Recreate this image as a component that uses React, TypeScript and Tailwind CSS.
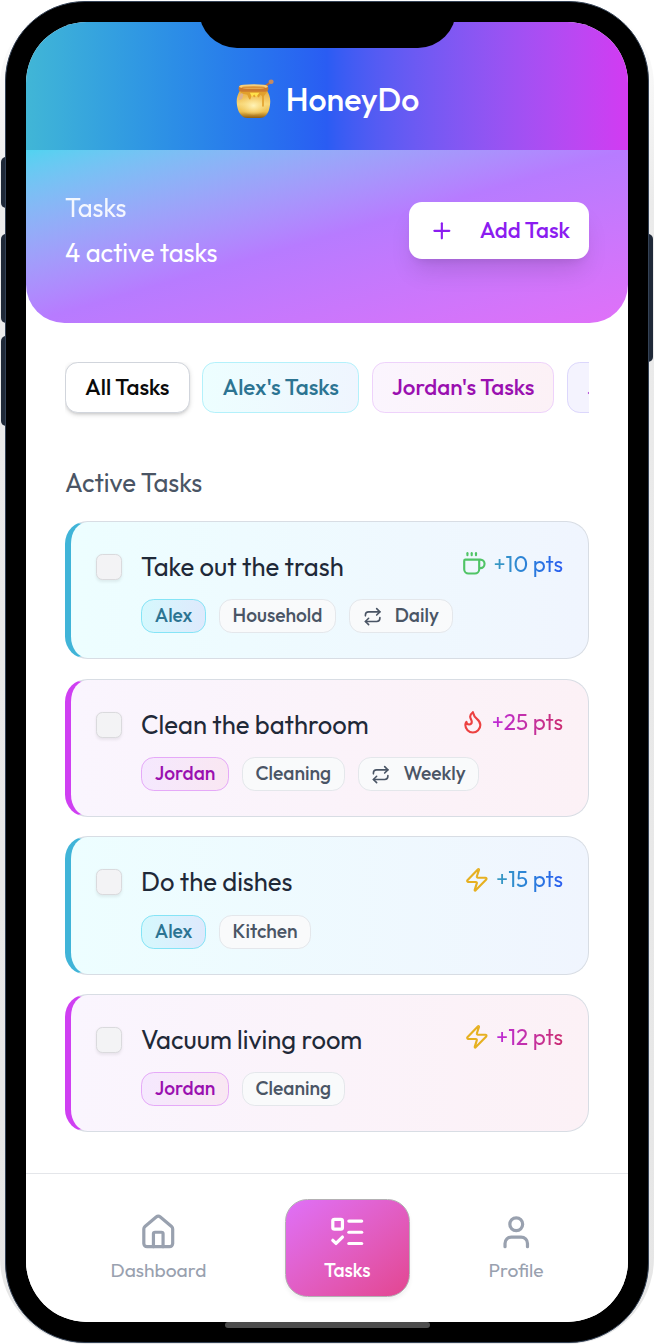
import React from "react";
import { Coffee, Flame, House, ListTodo, Plus, Repeat, User, Zap } from "lucide-react";

type Person = "Alex" | "Jordan";

interface Task {
  title: string;
  who: Person;
  room: string;
  every?: string;
  points: number;
  level: "easy" | "medium" | "hard";
}

const tasks: Task[] = [
  { title: "Take out the trash", who: "Alex", room: "Household", every: "Daily", points: 10, level: "easy" },
  { title: "Clean the bathroom", who: "Jordan", room: "Cleaning", every: "Weekly", points: 25, level: "hard" },
  { title: "Do the dishes", who: "Alex", room: "Kitchen", points: 15, level: "medium" },
  { title: "Vacuum living room", who: "Jordan", room: "Cleaning", points: 12, level: "medium" },
];

const theme = {
  Alex: {
    card: "border-l-[#40b4d8] from-[#edfeff] to-[#f0f5fe]",
    chip: "border-[#85e4f6] from-[#d5f8fd] to-[#dee9fc] text-[#2c7492]",
    points: "from-[#3a9bc0] to-[#2b5cf0]",
  },
  Jordan: {
    card: "border-l-[#cf3ff2] from-[#faf5fe] to-[#fcf1f6]",
    chip: "border-[#e5a9f8] from-[#f5e8fe] to-[#f9e7f2] text-[#9a10b0]",
    points: "from-[#bd27d8] to-[#cb2a70]",
  },
};

function HoneyPot() {
  return (
    <svg viewBox="0 0 38 40" className="h-[41px] w-[39px]">
      <defs>
        <linearGradient id="jar" x1="0" y1="0" x2="0" y2="1">
          <stop offset="0" stopColor="#e9a93c" />
          <stop offset="0.5" stopColor="#f8d878" />
          <stop offset="0.78" stopColor="#edbe4c" />
          <stop offset="1" stopColor="#8f5c10" />
        </linearGradient>
        <radialGradient id="shine" cx="0.5" cy="0.55" r="0.5">
          <stop offset="0" stopColor="#fff3b8" />
          <stop offset="1" stopColor="#fbe08a" stopOpacity="0" />
        </radialGradient>
      </defs>
      <path d="M28 8 35 3" stroke="#b06f48" strokeWidth="2" strokeLinecap="round" />
      <ellipse cx="35.200" cy="2.700" rx="2.500" ry="2.200" fill="#c48a62" />
      <path d="M5 11C2 16 1 20 2 26c1 7 5 12 10 12h12c6 0 9-5 10-12 1-6 0-10-3-15Z" fill="url(#jar)" />
      <ellipse cx="18" cy="25" rx="14" ry="10" fill="url(#shine)" />
      <path d="M5 12c1 3 3 3 6 3 1.500 0 1.500 2 2.500 4s1.600 1 2-1 2-2 2.500-1 1.500 1 2-.5 1.500-1 2 .5 1.500 1 2-.5 2-1 2.500 1v8c0 2 1.600 2 1.600 0v-8c0-2 3-3 3-5.500Z" fill="#e2a02c" />
      <path d="m14.500 13.500 2 4 2.200-2.500 2 2.500 3-4Z" fill="#ffe04b" />
      <rect x="3.500" y="6" width="29" height="6.500" rx="3.200" fill="#cb7a2e" />
      <ellipse cx="18" cy="7.300" rx="14" ry="2.300" fill="#f7d07a" />
      <ellipse cx="18" cy="8.200" rx="11.500" ry="1.100" fill="#dc9338" />
      <path d="M6 14c-1.500 2-2.500 4-2.500 6.500 3.500.5 4.500-3 4.500-6Z" fill="#d9b098" opacity=".85" />
    </svg>
  );
}

function LevelIcon({ level }: { level: Task["level"] }) {
  if (level === "easy") return <Coffee className="size-[25.7px] text-[#50c466]" />;
  if (level === "hard") return <Flame className="size-[25.7px] text-[#ec4141]" />;
  return <Zap className="size-[25.7px] text-[#e6b021]" />;
}

const chipBase =
  "flex h-[34px] items-center rounded-[12.8px] border px-[12.7px] text-[19.2px] font-medium whitespace-nowrap pb-px";

function TaskCard({ task }: { task: Task }) {
  const t = theme[task.who];
  return (
    <div
      className={`flex h-[138.300px] rounded-[22.5px] border border-l-[6px] border-y-[#d8dde4] border-r-[#d8dde4] bg-linear-to-r pr-[25px] pl-[25px] ${t.card}`}
    >
      <div className="mt-[32px] size-[26px] shrink-0 rounded-[6.4px] border border-[#dadadd] bg-[#f3f3f5] shadow-[0_1.6px_3px_rgba(0,0,0,0.07)]" />
      <div className="ml-[19px] flex min-w-0 flex-1 flex-col pt-[26px]">
        <div className="text-[25.6px] leading-[38.5px] font-[440] whitespace-nowrap text-[#1f2938]">{task.title}</div>
        <div className="mt-[12.7px] flex gap-[12.8px]">
          <div className={`${chipBase} bg-linear-to-r ${t.chip}`}>{task.who}</div>
          <div className={`${chipBase} border-[#e4e7eb] bg-[#f9fafb] text-[#4a5565]`}>{task.room}</div>
          {task.every && (
            <div className={`${chipBase} gap-[12.8px] border-[#e4e7eb] bg-[#f9fafb] text-[#4a5565]`}>
              <Repeat className="mt-[2px] size-[19.3px]" />
              {task.every}
            </div>
          )}
        </div>
      </div>
      <div className="mt-[25px] flex h-[34px] shrink-0 items-center gap-[6.400px]">
        <LevelIcon level={task.level} />
        <span
          className={`bg-linear-to-r bg-clip-text text-[22.4px] leading-[32px] font-[440] whitespace-nowrap text-transparent ${t.points}`}
        >
          +{task.points} pts
        </span>
      </div>
    </div>
  );
}

const tab =
  "flex h-[51px] shrink-0 items-center rounded-[12.8px] border px-[19.1px] pt-px text-[22.4px] font-medium whitespace-nowrap";

export default function App() {
  return (
    <div className="relative h-[1344px] w-[654px] overflow-hidden bg-white font-['Outfit','Lato',sans-serif]">
      <div className="absolute top-0 left-0 h-[1344px] w-[654px] rounded-[86px] bg-linear-to-b from-white via-[#ebebeb] via-15% to-[#e6e6e6]" />
      <div className="absolute top-[157px] left-[1px] h-[51px] w-[10px] rounded-l-[5px] bg-[#1f2938]" />
      <div className="absolute top-[234px] left-[1px] h-[89px] w-[10px] rounded-l-[5px] bg-[#1f2938]" />
      <div className="absolute top-[336px] left-[1px] h-[90px] w-[10px] rounded-l-[5px] bg-[#1f2938]" />
      <div className="absolute top-[234px] left-[643px] h-[128px] w-[10px] rounded-r-[5px] bg-[#1f2938]" />

      <div className="relative mt-[1px] ml-[5px] h-[1342px] w-[644px] rounded-[80px] border border-[#344256] bg-black pt-[20px] pl-[20px]">
        <div className="flex h-[1300px] w-[602px] flex-col overflow-hidden rounded-[61px] bg-white">
          <header className="flex h-[128px] shrink-0 items-center justify-center bg-linear-to-r from-[#41b6d6] via-[#2a5cf3] to-[#d23af2] pt-[26.500px]">
            <HoneyPot />
            <h1 className="ml-[12px] text-[32px] font-medium text-white">HoneyDo</h1>
          </header>

          <section className="flex h-[173px] shrink-0 items-start justify-between rounded-b-[38.5px] bg-linear-to-br from-[#50d3f0] via-[#b77bff] to-[#e070f8] px-[39px] pt-[39px]">
            <div className="text-[25.6px] leading-[38.5px] font-[440] text-white">
              <div className="opacity-90">Tasks</div>
              <div className="mt-[6.400px]">4 active tasks</div>
            </div>
            <button className="mt-[13px] flex h-[57px] w-[180px] items-center rounded-[12.8px] bg-white pl-[20px] text-[22.4px] font-medium whitespace-nowrap text-[#8b1cf0] shadow-[0_16px_24px_-5px_rgba(0,0,0,0.12),0_6px_10px_-6px_rgba(0,0,0,0.12)]">
              <Plus className="size-[25.7px]" />
              <span className="ml-[25px] pt-[1px]">Add Task</span>
            </button>
          </section>

          <div className="mx-[39px] mt-[39px] flex h-[60px] shrink-0 items-start gap-[12.8px] overflow-hidden">
            <button className={`${tab} border-[#d1d5dc] bg-white text-[#0a0a0a] shadow-[0_1.6px_5px_rgba(0,0,0,0.12),0_1.6px_3px_-1px_rgba(0,0,0,0.12)]`}>
              All Tasks
            </button>
            <button className={`${tab} border-[#b3f1fb] bg-linear-to-r from-[#edfeff] to-[#eff5fe] text-[#2c7492]`}>
              Alex's Tasks
            </button>
            <button className={`${tab} border-[#eed2fb] bg-linear-to-r from-[#fbf5fe] to-[#fcf1f6] text-[#9a10b0]`}>
              Jordan's Tasks
            </button>
            <button className={`${tab} border-[#dcd7fc] bg-[#f4f3fe] text-[#6a1de0]`}>Joint Tasks</button>
          </div>

          <main className="mt-[42px] flex grow flex-col px-[39px]">
            <h2 className="text-[25.6px] leading-[38.5px] font-[440] text-[#4a5565]">Active Tasks</h2>
            <div className="mt-[18.600px] flex flex-col gap-[19.400px]">
              {tasks.map((task) => (
                <TaskCard key={task.title} task={task} />
              ))}
            </div>
          </main>

          <nav className="flex h-[149px] shrink-0 items-start justify-between border-t border-[#e4e6ea] bg-white pt-[25px] pr-[58px] pl-[59.400px] text-[19.2px] leading-[26px] font-[440] text-[#99a1af]">
            <button className="flex h-[98px] w-[146px] flex-col items-center pt-[14px]">
              <House className="size-[38.5px]" />
              <span className="mt-[5.400px]">Dashboard</span>
            </button>
            <button className="ml-[1px] flex h-[98px] w-[125px] flex-col items-center rounded-[22.5px] border border-[#b3b0b3] bg-linear-to-br from-[#df70f8] to-[#e34590] pt-[13px] text-white shadow-[0_3px_4px_rgba(0,0,0,0.06)]">
              <ListTodo className="size-[38.5px]" />
              <span className="mt-[5.400px] font-medium">Tasks</span>
            </button>
            <button className="flex h-[98px] w-[108px] flex-col items-center pt-[14px]">
              <User className="size-[38.5px]" />
              <span className="mt-[5.400px]">Profile</span>
            </button>
          </nav>
        </div>
      </div>

      <div className="absolute top-[10px] left-[198.500px] h-[38px] w-[257px] rounded-b-[38px] bg-black" />
      <div className="absolute top-[1322px] left-[225px] h-[6px] w-[204.500px] rounded-[3px] bg-[#4d4d4d]" />
    </div>
  );
}
